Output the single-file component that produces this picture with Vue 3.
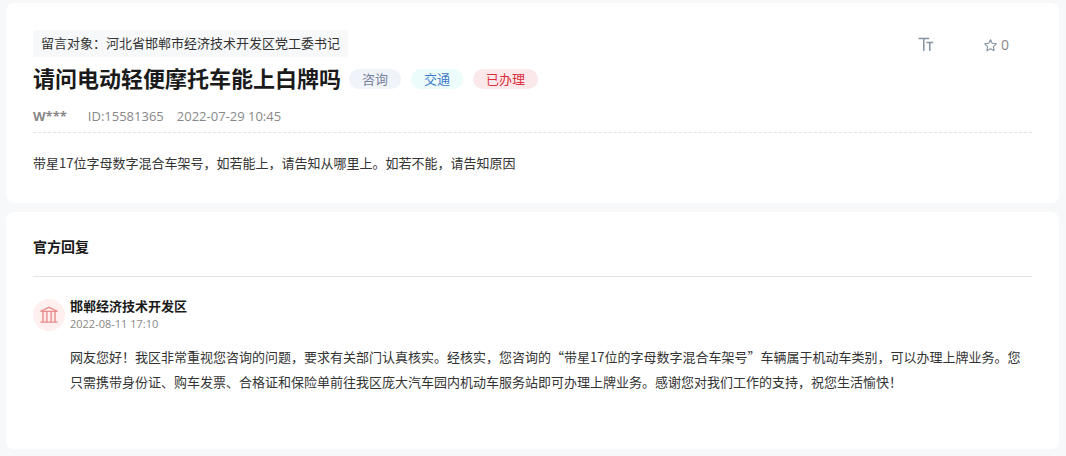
<script setup>
const message = {
  target: '河北省邯郸市经济技术开发区党工委书记',
  title: '请问电动轻便摩托车能上白牌吗',
  author: 'W***',
  id: '15581365',
  time: '2022-07-29 10:45',
  likes: 0,
  content: '带星17位字母数字混合车架号，如若能上，请告知从哪里上。如若不能，请告知原因',
}

const tags = [
  { text: '咨询', type: 'kind' },
  { text: '交通', type: 'field' },
  { text: '已办理', type: 'state' },
]

const reply = {
  name: '邯郸经济技术开发区',
  time: '2022-08-11 17:10',
  content:
    '网友您好！我区非常重视您咨询的问题，要求有关部门认真核实。经核实，您咨询的“带星17位的字母数字混合车架号”车辆属于机动车类别，可以办理上牌业务。您只需携带身份证、购车发票、合格证和保险单前往我区庞大汽车园内机动车服务站即可办理上牌业务。感谢您对我们工作的支持，祝您生活愉快！',
}
</script>

<template>
  <main class="page" lang="zh-CN">
    <article class="card message">
      <div class="top">
        <div class="target">留言对象：{{ message.target }}</div>
        <div class="actions">
          <button type="button" class="action" aria-label="字号">
            <svg width="16" height="16" viewBox="0 0 16 16" fill="none" stroke="currentColor" stroke-width="1.5">
              <path d="M0.5 1.5H11.2M5.8 1.5V14M8.4 5.6H15.2M11.8 5.6V14" />
            </svg>
          </button>
          <button type="button" class="action" aria-label="收藏">
            <svg width="13" height="13" viewBox="0 0 13 13" fill="none" stroke="currentColor" stroke-width="1.1" stroke-linejoin="round">
              <path d="M6.5 0.8L8.2 4.3L12.3 4.8L9.4 7.6L10.1 11.7L6.5 9.8L2.9 11.7L3.6 7.6L0.7 4.8L4.8 4.3Z" />
            </svg>
            <span>{{ message.likes }}</span>
          </button>
        </div>
      </div>
      <div class="headline">
        <h1>{{ message.title }}</h1>
        <ul class="tags">
          <li v-for="tag in tags" :key="tag.text" :class="tag.type">{{ tag.text }}</li>
        </ul>
      </div>
      <div class="meta">
        <strong>{{ message.author }}</strong>
        <span>ID:{{ message.id }}</span>
        <time>{{ message.time }}</time>
      </div>
      <p class="content">{{ message.content }}</p>
    </article>

    <section class="card replies">
      <h2>官方回复</h2>
      <div class="replier">
        <span class="avatar">
          <svg width="18" height="18" viewBox="0 0 18 18" fill="none" stroke="currentColor" stroke-width="1.3">
            <path d="M1.2 5L9 1.3L16.8 5" />
            <path d="M0.4 5.4H17.6M0.4 16.2H17.6" />
            <path d="M3 5.4V16M6.8 5.4V16M11.2 5.4V16M15 5.4V16" stroke-width="1.8" stroke-opacity="0.8" />
          </svg>
        </span>
        <div>
          <h3>{{ reply.name }}</h3>
          <time>{{ reply.time }}</time>
        </div>
      </div>
      <p class="answer">{{ reply.content }}</p>
    </section>
  </main>
</template>

<style>
body {
  margin: 0;
  background: #f7f8fa;
}
</style>

<style scoped>
.page {
  display: flex;
  flex-direction: column;
  gap: 9px;
  padding: 3px 7px 7px 6px;
  font-family: "Noto Sans CJK SC", "Open Sans", sans-serif;
  font-size: 13px;
  color: #333;
}

h1,
h2,
h3,
p,
ul {
  margin: 0;
  padding: 0;
}

.card {
  background: #fff;
  border-radius: 8px;
  padding: 0 27px;
}

.message {
  padding-top: 27px;
  padding-bottom: 28px;
}

.top {
  display: flex;
  justify-content: space-between;
  align-items: flex-end;
}

.target {
  padding: 0 8px 2px;
  line-height: 25px;
  background: #f7f8fa;
  border-radius: 2px;
}

.actions {
  display: flex;
  gap: 50px;
  padding-right: 23px;
}

.action {
  display: flex;
  align-items: center;
  gap: 4px;
  height: 24px;
  padding: 0;
  border: 0;
  background: none;
  color: #888;
  font: 14px/20px "Open Sans", sans-serif;
  cursor: pointer;
}

.action svg {
  color: #8593a3;
}

.headline {
  display: flex;
  align-items: center;
  gap: 8px;
  height: 44px;
}

h1 {
  padding-bottom: 4px;
  font-size: 22px;
  line-height: 32px;
  color: #1a1a1a;
}

.tags {
  display: flex;
  gap: 10px;
  list-style: none;
}

.tags li {
  padding: 0 13px;
  line-height: 20px;
  border-radius: 10px;
}

.tags .kind {
  background: #f0f3fa;
  color: #768399;
}

.tags .field {
  background: #ebfcfa;
  color: #3f78c9;
}

.tags .state {
  background: #fbe8ea;
  color: #dc2e3c;
}

.meta {
  display: flex;
  line-height: 31px;
  border-bottom: 1px dashed #e3e3e3;
  font-family: "Open Sans", sans-serif;
  color: #888;
}

.meta strong {
  margin-right: 21px;
}

.meta span {
  margin-right: 13px;
}

.content {
  padding-top: 17px;
  line-height: 25px;
}

.replies {
  padding-top: 5px;
  padding-bottom: 55px;
}

h2 {
  padding-bottom: 1px;
  font-size: 14px;
  line-height: 58px;
  color: #1a1a1a;
  border-bottom: 1px solid #e5e5e5;
}

.replier {
  display: flex;
  align-items: center;
  gap: 5px;
  margin-top: 20px;
}

.avatar {
  display: flex;
  align-items: center;
  justify-content: center;
  width: 32px;
  height: 32px;
  border-radius: 50%;
  background: #ffefee;
  color: #e88c8a;
}

h3 {
  font-size: 13px;
  line-height: 18px;
  color: #1a1a1a;
}

.replier time {
  display: block;
  font-family: "Open Sans", sans-serif;
  font-size: 11px;
  line-height: 18px;
  color: #888;
}

.answer {
  margin-top: 11px;
  padding-left: 37px;
  line-height: 25px;
}
</style>
